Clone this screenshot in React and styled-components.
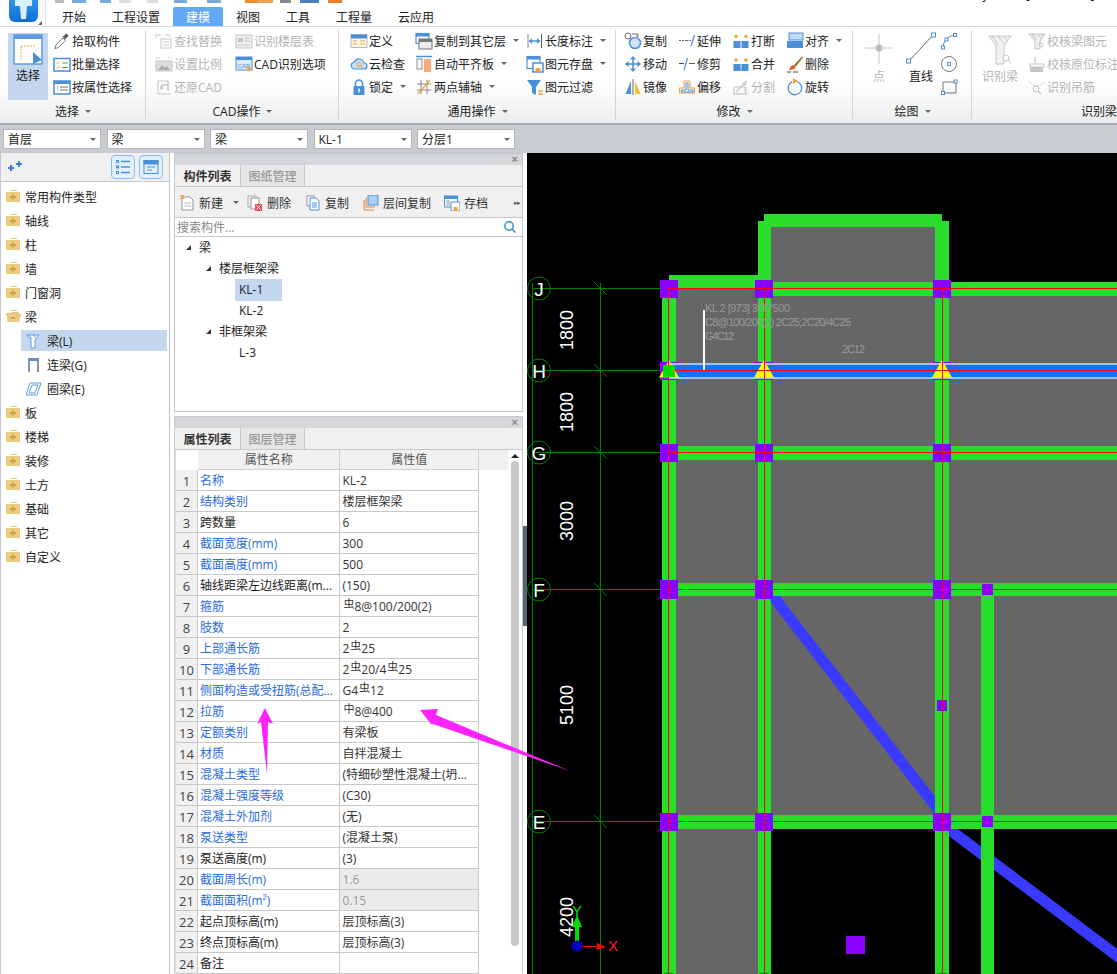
import styled, { createGlobalStyle } from "styled-components"

const Global = createGlobalStyle`
    html, body {
        margin: 0;
        padding: 0;
        background: #fff;
    }
    * {
        box-sizing: border-box;
    }
`

const BLUE = "#4a90d9"
const LIGHT = "#a9cff5"
const ORANGE = "#f5a03c"
const DIS = "#c6c6c6"

const Ico = ({ s = 18, vb = 18, children }) => (
    <svg width={s} height={s} viewBox={`0 0 ${vb} ${vb}`} fill="none">{children}</svg>
)

// ribbon icons
const icons = {
    pick: <Ico><path d="M2 16.500l1-3.500 7-7 2.500 2.500-7 7z" fill="#fff" stroke="#777" /><path d="M9.500 4.500l2-1 1-1.500c1-1 3.500 1 2.500 2.500l-1.500 1-1 2z" fill="#555" /></Ico>,
    batch: <Ico><rect x="1" y="3.500" width="16" height="12.500" fill="#fff" stroke={BLUE} strokeWidth="1.500" /><path d="M3.500 7.500l1.300 1.300 2.200-2.300M3.500 12l1.300 1.300 2.200-2.300" stroke={ORANGE} /><path d="M9 8h6M9 12.500h6" stroke="#888" /></Ico>,
    attr: <Ico><rect x="1" y="3" width="16" height="13" fill="#fff" stroke={BLUE} strokeWidth="1.500" /><rect x="1" y="3" width="16" height="3" fill={BLUE} /><path d="M4 9h1M7 9h8M4 12h1M7 12h8" stroke="#777" /></Ico>,
    find: <Ico><path d="M1 3h5M10 3h4l1 2M1 3v3" stroke={DIS} /><rect x="6" y="7" width="10" height="9" stroke={DIS} /><path d="M8 10h6M8 13h6" stroke={DIS} /></Ico>,
    floor: <Ico><rect x="1" y="3" width="16" height="13" fill="#eee" stroke={DIS} /><rect x="3" y="6" width="5" height="4" fill={DIS} /><path d="M10 6h5M10 9h5M3 13h12" stroke={DIS} /></Ico>,
    scale: <Ico><rect x="1" y="6" width="16" height="10" fill="#ddd" stroke={DIS} /><path d="M3 15l4-5 3 3 2-2 3 4z" fill="#aaa" /><path d="M1 3h4M13 3h4" stroke={DIS} strokeDasharray="2 1" /></Ico>,
    restore: <Ico><path d="M3 3v13h13M3 3h10" stroke={DIS} /><path d="M13 3v10M6 11a4 4 0 0 1 7-3" stroke={DIS} strokeWidth="1.500" /><path d="M5 8l1 4 3-2z" fill={DIS} /></Ico>,
    cadopt: <Ico><rect x="1" y="2" width="16" height="13" fill="#dbe9f8" stroke={BLUE} /><rect x="1" y="2" width="16" height="3" fill={BLUE} /><text x="2.500" y="12.500" fontSize="6" fontFamily="Liberation Sans" fill={BLUE}>CAD</text><path d="M12 10l5 4-3 1-1 3z" fill={ORANGE} /></Ico>,
    define: <Ico><rect x="1" y="2.500" width="16" height="13" fill="#fdf6e8" stroke="#bbb" /><rect x="1" y="2.500" width="16" height="4" fill={BLUE} /><path d="M3 9h4M3 12h4M10 9h5M10 12h5" stroke={ORANGE} /></Ico>,
    cloud: <Ico><path d="M5 14a3.500 3.500 0 0 1-.5-7 5 5 0 0 1 9.500 1 3 3 0 0 1 0 6z" fill="#c6dcf5" stroke={BLUE} strokeWidth="1.200" /><circle cx="9" cy="9.500" r="2" stroke={ORANGE} /><path d="M10.500 11l2 1.500" stroke={ORANGE} /></Ico>,
    lock: <Ico><path d="M5.500 8V5.500a3.500 3.500 0 0 1 7 0V8" stroke={BLUE} strokeWidth="1.600" /><rect x="3.500" y="8" width="11" height="9" rx="1" fill={BLUE} /><rect x="8.300" y="10.500" width="1.500" height="4" fill="#fff" /></Ico>,
    copyto: <Ico><rect x="1" y="1.500" width="13" height="10" fill="#fff" stroke={BLUE} strokeWidth="1.200" /><rect x="1" y="1.500" width="13" height="3" fill={BLUE} /><rect x="4" y="7" width="13" height="10" fill="#eee" stroke="#777" /><rect x="4" y="7" width="13" height="3" fill="#777" /></Ico>,
    flush: <Ico><path d="M1 1.500h16" stroke={BLUE} strokeWidth="1.500" /><rect x="2" y="4" width="5" height="10" fill="#fff" stroke="#888" /><rect x="9" y="4" width="7" height="13" fill="#fba878" /></Ico>,
    axis: <Ico><path d="M2 6h14M2 12h14M6 2v14M12 2v14" stroke="#888" /><path d="M3 16L15 2" stroke={ORANGE} strokeWidth="1.300" /></Ico>,
    dim: <Ico><path d="M2 2v14" stroke="#888" /><path d="M15.500 2v14" stroke="#555" /><path d="M3 9h11" stroke={BLUE} strokeWidth="1.500" /><path d="M3 9l3-3v6zM14 9l-3-3v6z" fill={BLUE} /></Ico>,
    saveel: <Ico><rect x="1" y="1.500" width="13" height="12" fill="#fff" stroke={BLUE} strokeWidth="1.200" /><rect x="1" y="1.500" width="13" height="3" fill={BLUE} /><rect x="7" y="8" width="10" height="9" fill="#fff" stroke={BLUE} strokeWidth="1.500" /><rect x="9.500" y="13" width="5" height="4" fill={ORANGE} /></Ico>,
    filter: <Ico><path d="M1 2h14l-5 7v8l-4-2V9z" fill={BLUE} /><path d="M12 13h5M12 16h5" stroke={ORANGE} strokeWidth="1.300" /></Ico>,
    copy: <Ico><circle cx="4" cy="4" r="3" stroke="#666" /><circle cx="11" cy="11" r="5.500" fill="#cfe2f7" stroke={BLUE} strokeWidth="1.500" /><path d="M8 2h6v3M14 5l-1.500-1.500" stroke="#666" /></Ico>,
    move: <Ico><path d="M9 1l3 3.500H6zM9 17l3-3.500H6zM1 9l3.500-3v6zM17 9l-3.500-3v6z" fill={BLUE} /><path d="M9 4v10M4 9h10" stroke={BLUE} strokeWidth="1.500" /></Ico>,
    mirror: <Ico><path d="M7 3v13H1.500z" fill={BLUE} /><path d="M11 3v13h5.500z" fill="#fbbc2c" /><path d="M9 1v16" stroke="#666" /></Ico>,
    extend: <Ico><path d="M1 8.500h8" stroke="#666" strokeDasharray="2 1" /><path d="M9 8.500h5" stroke="#666" strokeDasharray="1.500 1" /><path d="M16.500 3L13 14" stroke={BLUE} strokeWidth="1.200" /></Ico>,
    trim: <Ico><path d="M1 8.500h5M11 8.500h6" stroke="#444" /><path d="M11 8.500h6" stroke="#666" strokeDasharray="2 1" /><path d="M9.500 3L6 15" stroke={BLUE} strokeWidth="1.200" /></Ico>,
    offset: <Ico><path d="M6 3h5l1 1v6h4.500v5h-15v-5H6z" stroke={ORANGE} strokeWidth="1.100" /><path d="M8 5h2v7h5v2H3.500v-2H8z" stroke={BLUE} /></Ico>,
    split: <Ico><path d="M2 9h11v7H2zM14 9v7" stroke={DIS} /><path d="M4 14l11-11" stroke={DIS} strokeWidth="1.500" /><path d="M11 5l3 2" stroke={DIS} strokeWidth="2" /><path d="M1 16h16" stroke={DIS} strokeDasharray="2 1" /></Ico>,
    breakIt: <Ico><rect x="1.500" y="9" width="7" height="7" fill={BLUE} /><rect x="9.500" y="9" width="7" height="7" fill={BLUE} /><path d="M2 4.500h4M12 4.500h4" stroke={ORANGE} strokeWidth="1.300" /><path d="M4 2.500v4M14 2.500v4" stroke={ORANGE} strokeWidth="1.300" /></Ico>,
    merge: <Ico><rect x="1.500" y="9" width="15" height="7" fill={BLUE} /><path d="M9 9v7" stroke="#cfe2f7" /><path d="M2 5h4M12 5h4" stroke={ORANGE} strokeWidth="1.300" /><path d="M4 3v4M14 3v4" stroke={ORANGE} strokeWidth="1.300" /></Ico>,
    align: <Ico><rect x="3" y="1" width="14" height="7" fill="#c3dbf6" stroke={BLUE} /><rect x="1" y="9" width="16" height="7" fill={BLUE} /></Ico>,
    erase: <Ico><path d="M8 10L16 1.500l1 1-7 9z" fill="#a0702c" /><path d="M8 10c-3 0-4 2-5 5 3 0 6-1 7-3z" fill="#e0622a" /><path d="M1 17h4M7 17h5" stroke="#444" /></Ico>,
    rotate: <Ico><path d="M11 3.500a6.800 6.800 0 1 1-5 .3" stroke={BLUE} strokeWidth="1.300" /><path d="M7 0l5 3-5 3z" fill={ORANGE} /></Ico>,
    arc: <Ico><path d="M3 16c0-7 5-12 12-13" stroke="#777" /><rect x="1.500" y="14" width="3" height="3" fill="#fff" stroke={BLUE} /><rect x="5" y="6" width="3" height="3" fill="#fff" stroke={BLUE} /><rect x="13.500" y="1.500" width="3" height="3" fill="#fff" stroke={BLUE} /></Ico>,
    circle: <Ico><circle cx="9" cy="9" r="7.500" stroke="#777" /><rect x="7.500" y="7.500" width="3" height="3" fill="#fff" stroke={BLUE} /></Ico>,
    rect: <Ico><path d="M3 4h13v11H3z" stroke="#777" /><rect x="14" y="2" width="3" height="3" fill="#fff" stroke={BLUE} /><rect x="1.500" y="13.500" width="3" height="3" fill="#fff" stroke={BLUE} /></Ico>,
    checkBeam: <Ico><path d="M1 2h16l-5 7v8H7V9z" fill="#eee" stroke={DIS} /><path d="M4 2l4 6M9 2l4 4M13 2l2 2" stroke={DIS} /><circle cx="13" cy="13" r="2" stroke={DIS} /></Ico>,
    checkPos: <Ico><path d="M7 2v7h9v3H2V9h5" stroke={DIS} strokeWidth="1.200" /><rect x="2" y="12" width="13" height="5" fill={DIS} /></Ico>,
    hanger: <Ico><path d="M1 3c3 3 3 5 8 5s5-2 8-5" stroke={DIS} strokeDasharray="2 1" /><circle cx="8" cy="11" r="3" stroke={DIS} /><path d="M10 13l3 3" stroke={DIS} strokeWidth="1.500" /></Ico>,
}

const SelectBig = () => (
    <svg width="30" height="32" viewBox="0 0 30 32" fill="none">
        <rect x="1" y="1" width="28" height="29" fill="#fff" stroke="#5e9be0" strokeWidth="1.500" />
        <rect x="1" y="1" width="28" height="4" fill="#5e9be0" />
        <path d="M8 12h15M8 12v15" stroke="#f5b042" strokeDasharray="2 1" />
        <path d="M20 18l9 8-9 4z" fill="#4a90d9" />
    </svg>
)

const PointBig = () => (
    <svg width="30" height="32" viewBox="0 0 30 32" fill="none">
        <path d="M15 2v30M1 16h28" stroke="#c6c6c6" />
        <circle cx="15" cy="16" r="3.500" fill="#bdbdbd" />
    </svg>
)

const LineBig = () => (
    <svg width="32" height="34" viewBox="0 0 32 34" fill="none">
        <path d="M4 30L28 4" stroke="#666" />
        <rect x="1.500" y="28" width="4" height="4" fill="#fff" stroke="#4a90d9" />
        <rect x="26.500" y="2" width="4" height="4" fill="#fff" stroke="#4a90d9" />
    </svg>
)

const BeamBig = () => (
    <svg width="24" height="32" viewBox="0 0 24 32" fill="none">
        <path d="M1 2h22l-7 10v18H8V12z" fill="#f1f1f1" stroke="#c6c6c6" />
        <path d="M4 2l6 9M10 2l6 8M16 2l4 5" stroke="#c6c6c6" />
        <circle cx="18" cy="24" r="3" fill="#fff" stroke="#c6c6c6" />
        <path d="M20 26l3 3" stroke="#c6c6c6" />
    </svg>
)

// side tree icons
const Folder = ({ open }) => (
    <svg width="15" height="14" viewBox="0 0 15 14" fill="none">
        <path d="M5 1h6v1H5z" fill="#ecc885" />
        {open ? <path d="M0 4h5l1-1h7v2H3l2 8h8l2-8H5L3 13H2z" fill="#e9c47c" /> : <path d="M0 3h14v10H0z" fill="#edc981" />}
        {open ? <path d="M3 5h12l-2 8H1z" fill="#edc981" /> : null}
        {open ? <path d="M5 9h4" stroke="#c7902f" strokeWidth="1.500" /> : <path d="M4 8h6M7 5.500v5" stroke="#d09a3a" strokeWidth="1.500" />}
    </svg>
)

const BeamIcon = () => (
    <svg width="16" height="16" viewBox="0 0 16 16" fill="none">
        <path d="M1 2h12l-4 5v8H5V7z" fill="#fff" stroke="#5e9be0" />
        <path d="M3 2l3 4M7 2l3 3" stroke="#5e9be0" />
    </svg>
)
const LinkBeamIcon = () => (
    <svg width="16" height="16" viewBox="0 0 16 16" fill="none">
        <rect x="2" y="1" width="11" height="3" fill="#6b8fb8" />
        <path d="M3 4v11M12 4v11" stroke="#8b96a3" strokeWidth="2" />
    </svg>
)
const RingIcon = () => (
    <svg width="16" height="16" viewBox="0 0 16 16" fill="none">
        <path d="M4 2h11l-4 12H0z" fill="#fff" stroke="#5e9be0" />
        <path d="M6 4h6l-3 8H3z" stroke="#5e9be0" />
    </svg>
)

// panel toolbar icons
const NewIcon = () => (
    <svg width="16" height="16" viewBox="0 0 16 16" fill="none">
        <path d="M3 2h8l3 3v10H3z" fill="#fff" stroke="#8b96a3" />
        <path d="M5 8h7M5 11h7" stroke="#b0b8c0" />
        <path d="M1 1h4M3 0v4M1 4l4-4M1 0l4 4" stroke="#f5a03c" />
    </svg>
)
const DeleteIcon = () => (
    <svg width="16" height="16" viewBox="0 0 16 16" fill="none">
        <path d="M1 1h8v11H1z" stroke="#aaa" />
        <path d="M4 3h8v11H4z" fill="#fff" stroke="#8b96a3" />
        <rect x="8" y="9" width="7" height="7" fill="#e2504a" />
        <path d="M9.500 10.500l4 4M13.500 10.500l-4 4" stroke="#fff" />
    </svg>
)
const CopyIcon = () => (
    <svg width="16" height="16" viewBox="0 0 16 16" fill="none">
        <path d="M2 1h7v10H2z" fill="#fff" stroke="#8b96a3" />
        <path d="M5 3h6l3 3v9H5z" fill="#fff" stroke="#4a90d9" />
        <path d="M7 8h5M7 10h5M7 12h5" stroke="#4a90d9" />
    </svg>
)
const FloorCopyIcon = () => (
    <svg width="16" height="16" viewBox="0 0 16 16" fill="none">
        <rect x="5" y="0" width="10" height="10" fill={LIGHT} stroke="#4a90d9" />
        <path d="M3 3v9h9M1 5v10h10" stroke="#f07d2a" />
    </svg>
)
const SaveIcon = () => (
    <svg width="16" height="16" viewBox="0 0 16 16" fill="none">
        <rect x="0.500" y="1" width="13" height="11" fill="#fff" stroke="#4a90d9" />
        <rect x="0.500" y="1" width="13" height="3" fill="#4a90d9" />
        <path d="M2 6h4M2 8h4M2 10h4" stroke="#999" />
        <rect x="7" y="7" width="9" height="9" fill="#fff" stroke="#4a90d9" />
        <rect x="9.500" y="12" width="4" height="4" fill="#f5a03c" />
    </svg>
)

const ribbonGroups = [
    {
        label: "选择", width: 146, pad: 8,
        big: [{ icon: <SelectBig />, text: "选择", active: true, width: 40 }],
        columns: [45, 96],
        tools: [
            [{ icon: "pick", text: "拾取构件" }, { icon: "batch", text: "批量选择" }, { icon: "attr", text: "按属性选择" }],
        ],
    },
    {
        label: "CAD操作", width: 193, pad: 9,
        columns: [80, 100],
        tools: [
            [{ icon: "find", text: "查找替换", off: true }, { icon: "scale", text: "设置比例", off: true }, { icon: "restore", text: "还原CAD", off: true }],
            [{ icon: "floor", text: "识别楼层表", off: true }, { icon: "cadopt", text: "CAD识别选项" }],
        ],
    },
    {
        label: "通用操作", width: 277, pad: 11,
        columns: [65, 111, 90],
        tools: [
            [{ icon: "define", text: "定义" }, { icon: "cloud", text: "云检查" }, { icon: "lock", text: "锁定", caret: true }],
            [{ icon: "copyto", text: "复制到其它层", caret: true }, { icon: "flush", text: "自动平齐板", caret: true }, { icon: "axis", text: "两点辅轴", caret: true }],
            [{ icon: "dim", text: "长度标注", caret: true }, { icon: "saveel", text: "图元存盘", caret: true }, { icon: "filter", text: "图元过滤" }],
        ],
    },
    {
        label: "修改", width: 237, pad: 8,
        columns: [54, 54, 54, 70],
        tools: [
            [{ icon: "copy", text: "复制" }, { icon: "move", text: "移动" }, { icon: "mirror", text: "镜像" }],
            [{ icon: "extend", text: "延伸" }, { icon: "trim", text: "修剪" }, { icon: "offset", text: "偏移" }],
            [{ icon: "breakIt", text: "打断" }, { icon: "merge", text: "合并" }, { icon: "split", text: "分割", off: true }],
            [{ icon: "align", text: "对齐", caret: true }, { icon: "erase", text: "删除" }, { icon: "rotate", text: "旋转" }],
        ],
    },
]

const tabs = ["开始", "工程设置", "建模", "视图", "工具", "工程量", "云应用"]

const quick = [
    [9, 8, "#bbb"], [14, 14, "#7aa9dc"], [11, 8, "#7aa9dc"], [12, 16, "#ddd"], [11, 16, "#ddd"], [13, 20, "#7aa9dc"],
    [14, 24, "#7aa9dc"], [13, 0, "#e8902e"], [15, 7, "#e8a25a"], [11, 9, "#888"], [19, 9, "#4a7fb8"], [14, 6, "#e8802e"],
]

const selects = ["首层", "梁", "梁", "KL-1", "分层1"]

const sideTree = [
    { text: "常用构件类型" }, { text: "轴线" }, { text: "柱" }, { text: "墙" }, { text: "门窗洞" },
    { text: "梁", open: true },
    { text: "梁(L)", icon: <BeamIcon />, child: true, selected: true },
    { text: "连梁(G)", icon: <LinkBeamIcon />, child: true },
    { text: "圈梁(E)", icon: <RingIcon />, child: true },
    { text: "板" }, { text: "楼梯" }, { text: "装修" }, { text: "土方" }, { text: "基础" }, { text: "其它" }, { text: "自定义" },
]

const listTree = [
    { text: "梁", level: 0, arrow: true },
    { text: "楼层框架梁", level: 1, arrow: true },
    { text: "KL-1", level: 2, selected: true },
    { text: "KL-2", level: 2 },
    { text: "非框架梁", level: 1, arrow: true },
    { text: "L-3", level: 2 },
]

const listTools = [
    { icon: <NewIcon />, text: "新建", caret: true, width: 68 },
    { icon: <DeleteIcon />, text: "删除", width: 58 },
    { icon: <CopyIcon />, text: "复制", width: 58 },
    { icon: <FloorCopyIcon />, text: "层间复制", width: 81 },
    { icon: <SaveIcon />, text: "存档", width: 60 },
]

const R = ({ children }) => <Rebar>{children}</Rebar>

const props = [
    ["名称", "KL-2", true],
    ["结构类别", "楼层框架梁", true],
    ["跨数量", "6"],
    ["截面宽度(mm)", "300", true],
    ["截面高度(mm)", "500", true],
    ["轴线距梁左边线距离(m...", "(150)"],
    ["箍筋", <><R>虫</R>8@100/200(2)</>, true],
    ["肢数", "2", true],
    ["上部通长筋", <>2<R>虫</R>25</>, true],
    ["下部通长筋", <>2<R>虫</R>20/4<R>虫</R>25</>, true],
    ["侧面构造或受扭筋(总配...", <>G4<R>虫</R>12</>, true],
    ["拉筋", <><R>中</R>8@400</>, true],
    ["定额类别", "有梁板", true],
    ["材质", "自拌混凝土", true],
    ["混凝土类型", "(特细砂塑性混凝土(坍...", true],
    ["混凝土强度等级", "(C30)", true],
    ["混凝土外加剂", "(无)", true],
    ["泵送类型", "(混凝土泵)", true],
    ["泵送高度(m)", "(3)"],
    ["截面周长(m)", "1.6", true, true],
    ["截面面积(m²)", "0.15", true, true],
    ["起点顶标高(m)", "层顶标高(3)"],
    ["终点顶标高(m)", "层顶标高(3)"],
    ["备注", ""],
]

function ToolItem({ tool }) {
    return (
        <Tool $off={tool.off}>
            <ToolIcon>{icons[tool.icon]}</ToolIcon>
            <span>{tool.text}</span>
            {tool.caret && <Caret />}
        </Tool>
    )
}

function RibbonGroup({ group }) {
    return (
        <Group $width={group.width} $pad={group.pad}>
            <GroupBody>
                {group.big && group.big.map((b) => (
                    <BigTool key={b.text} $active={b.active} $width={b.width}>
                        {b.icon}
                        <span>{b.text}</span>
                    </BigTool>
                ))}
                {group.tools.map((col, i) => (
                    <ToolColumn key={i} $width={group.columns[group.big ? i + 1 : i]}>
                        {col.map((t) => <ToolItem key={t.text} tool={t} />)}
                    </ToolColumn>
                ))}
            </GroupBody>
            <GroupLabel $pad={group.pad}>{group.label}<Caret /></GroupLabel>
        </Group>
    )
}

const gridRows = [
    { y: 288, letter: "J", top: 280, h: 18 },
    { y: 370, letter: "H", top: 362, h: 18 },
    { y: 452, letter: "G", top: 444, h: 18 },
    { y: 589, letter: "F", top: 580, h: 19 },
    { y: 821, letter: "E", top: 813, h: 18 },
]
const colsX = [669, 764, 942]
const dims = [["1800", 330], ["1800", 412], ["3000", 521], ["5100", 705], ["4200", 917]]

// the CAD viewport, drawn in page coordinates
function CadDrawing() {
    return (
        <svg width="590" height="821" viewBox="527 153 590 821" style={{ display: "block" }}>
            <g shapeRendering="crispEdges" fill="#666">
                <rect x="527" y="153" width="590" height="821" fill="#000" />
                <rect x="764" y="221" width="178" height="70" />
                <rect x="669" y="288" width="448" height="534" />
                <rect x="669" y="822" width="95" height="152" />
            </g>

            <path d="M768 590L940 812" stroke="#3a3aff" strokeWidth="11" />
            <path d="M942 824L1120 958" stroke="#3a3aff" strokeWidth="11" />

            <g shapeRendering="crispEdges" fill="#2bdd2b">
                <rect x="662" y="288" width="14" height="686" />
                <rect x="758" y="221" width="13" height="753" />
                <rect x="935" y="221" width="14" height="753" />
                <rect x="981" y="589" width="13" height="385" />
                <rect x="764" y="214" width="178" height="13" />
                <rect x="669" y="275" width="95" height="14" />
                <rect x="771" y="282" width="346" height="14" />
                <rect x="669" y="446" width="448" height="14" />
                <rect x="669" y="583" width="448" height="13" />
                <rect x="669" y="815" width="448" height="14" />
            </g>

            <g shapeRendering="crispEdges">
                {colsX.map((x) => gridRows.map((r) => (
                    <rect key={`${x}-${r.y}`} x={x - 9} y={r.top} width="18" height={r.h} fill="#8800ff" />
                )))}
                <rect x="982" y="584" width="11" height="11" fill="#8800ff" />
                <rect x="982" y="816" width="11" height="11" fill="#8800ff" />
                <rect x="937" y="700" width="10" height="11" fill="#8800ff" />
                <rect x="846" y="936" width="19" height="18" fill="#8800ff" />
                <rect x="668" y="363" width="449" height="16" fill="#9cc4f8" />
                <rect x="668" y="365" width="449" height="12" fill="#1070ff" />
            </g>

            {colsX.map((x) => <path key={x} d={`M${x} 360l10 17.500h-20z`} fill="#ffff00" />)}

            <g shapeRendering="crispEdges" fill="#ff0000">
                <rect x="668" y="288" width="1" height="686" />
                <rect x="764" y="288" width="1" height="686" />
                <rect x="942" y="288" width="1" height="686" />
                {gridRows.map((r) => <rect key={r.y} x="668" y={r.y} width="449" height="1" />)}
            </g>

            <rect x="663" y="365" width="12" height="12" fill="#00e000" shapeRendering="crispEdges" />
            <rect x="703" y="310" width="2" height="60" fill="#fff" shapeRendering="crispEdges" />

            <DimText x="705" y="312" textLength="85">KL 2 [973] 300*500</DimText>
            <DimText x="705" y="326" textLength="146">C8@100/200(2) 2C25;2C20/4C25</DimText>
            <DimText x="705" y="340" textLength="29">G4C12</DimText>
            <DimText x="842" y="353" textLength="23">2C12</DimText>

            <g stroke="#008000" fill="none">
                <path d="M532.500 283V974M600.500 283V974" shapeRendering="crispEdges" />
                {gridRows.map((r) => (
                    <g key={r.y}>
                        <path d={`M532 ${r.y + 0.5}H660`} shapeRendering="crispEdges" />
                        <path d={`M594 ${r.y - 6}l13 13`} />
                        <circle cx="539" cy={r.y + 0.5} r="11.500" />
                    </g>
                ))}
                {colsX.map((x) => <circle key={x} cx={x} cy="985" r="12" />)}
            </g>

            {gridRows.map((r) => <AxisLetter key={r.y} x="539" y={r.y + 7.5}>{r.letter}</AxisLetter>)}
            {dims.map(([t, y]) => <DimLabel key={y} transform={`translate(573 ${y}) rotate(-90)`}>{t}</DimLabel>)}

            <path d="M575 946V927h-3l5-12 5 12h-3v19z" fill="#00e000" />
            <path d="M577 946h20v-3l9 4-9 3v-3h-20z" fill="#ff0000" />
            <circle cx="577" cy="946" r="5.500" fill="#0000c0" />
            <AxisMark x="577" y="916" fill="#00e000">Y</AxisMark>
            <AxisMark x="613" y="951" fill="#ff2020">X</AxisMark>
        </svg>
    )
}

export default function App() {
    return (
        <Page>
            <Global />

            <Header>
                <LogoCell>
                    <svg width="29" height="22" viewBox="0 0 29 22">
                        <defs>
                            <linearGradient id="lg" x1="0" y1="0" x2="0" y2="1">
                                <stop offset="0" stopColor="#3ea5f2" />
                                <stop offset="1" stopColor="#0b6fd8" />
                            </linearGradient>
                        </defs>
                        <rect x="0" y="-10" width="29" height="32" rx="6" fill="url(#lg)" />
                        <path d="M6 0h17v6h-5l-1 13h-5l-1-13H6z" fill="#d9f0ff" />
                    </svg>
                    <Grip />
                </LogoCell>
                <HeaderRight>
                    <TitleRow>
                        <QuickBar>
                            {quick.map(([w, gap, color], i) => <QuickBit key={i} $w={w} $gap={gap} $color={color} />)}
                        </QuickBar>
                        <TitleText>广联达BIM土建计量平台 GTJ2018 - [未保存工程]</TitleText>
                    </TitleRow>
                    <TabRow>
                        {tabs.map((t) => <Tab key={t} $active={t === "建模"}>{t}</Tab>)}
                    </TabRow>
                </HeaderRight>
            </Header>

            <Ribbon>
                {ribbonGroups.map((g) => <RibbonGroup key={g.label} group={g} />)}

                <Group $width={119} $pad={0}>
                    <GroupBody>
                        <DrawBig $off $width={42} $lift={3} $after={5}><PointBig /><span>点</span></DrawBig>
                        <DrawBig $width={32} $lift={2} $after={3}><LineBig /><span>直线</span></DrawBig>
                        <MiniIcons>{icons.arc}{icons.circle}{icons.rect}</MiniIcons>
                    </GroupBody>
                    <GroupLabel $pad={0}>绘图<Caret /></GroupLabel>
                </Group>

                <Group $width={145} $pad={5} $last>
                    <GroupBody>
                        <DrawBig $off $width={36} $lift={5} $after={10}><BeamBig /><span>识别梁</span></DrawBig>
                        <ToolColumn $width={100}>
                            <ToolItem tool={{ icon: "checkBeam", text: "校核梁图元", off: true }} />
                            <ToolItem tool={{ icon: "checkPos", text: "校核原位标注", off: true }} />
                            <ToolItem tool={{ icon: "hanger", text: "识别吊筋", off: true }} />
                        </ToolColumn>
                    </GroupBody>
                    <GroupLabel $right>识别梁</GroupLabel>
                </Group>
            </Ribbon>

            <SelectBar>
                {selects.map((s, i) => <FakeSelect key={i}>{s}<Caret /></FakeSelect>)}
            </SelectBar>

            <Main>
                <SidePanel>
                    <SideTop>
                        <AddMark>
                            <svg width="16" height="12" viewBox="0 0 16 12" fill="none">
                                <path d="M1 8h6M4 5v6" stroke="#3a7fc8" strokeWidth="2" />
                                <path d="M9 4h6M12 1v6" stroke="#3a7fc8" strokeWidth="2" />
                            </svg>
                        </AddMark>
                        <ViewBtn>
                            <svg width="16" height="16" viewBox="0 0 16 16" fill="none" stroke="#4a90d9">
                                <rect x="1.500" y="1.500" width="2" height="2" />
                                <rect x="1.500" y="7" width="2" height="2" />
                                <rect x="1.500" y="12.500" width="2" height="2" />
                                <path d="M6 2.500h9M6 8h9M6 13.500h9" strokeWidth="1.300" />
                            </svg>
                        </ViewBtn>
                        <ViewBtn>
                            <svg width="16" height="16" viewBox="0 0 16 16" fill="none" stroke="#4a90d9">
                                <rect x="1" y="1.500" width="14" height="13" />
                                <rect x="1" y="1.500" width="14" height="3.500" fill="#4a90d9" />
                                <path d="M4 8h8M4 11h5" />
                            </svg>
                        </ViewBtn>
                    </SideTop>
                    <SideList>
                        {sideTree.map((n, i) => (
                            <SideRow key={i} $child={n.child} $selected={n.selected}>
                                <SideIcon $child={n.child}>{n.icon || <Folder open={n.open} />}</SideIcon>
                                {n.text}
                            </SideRow>
                        ))}
                    </SideList>
                </SidePanel>

                <CenterColumn>
                    <Panel $height={259}>
                        <PanelStrip><CloseMark>×</CloseMark></PanelStrip>
                        <PanelTabs>
                            <PanelTab $active>构件列表</PanelTab>
                            <PanelTab>图纸管理</PanelTab>
                        </PanelTabs>
                        <ListToolbar>
                            {listTools.map((t) => (
                                <ListTool key={t.text} $width={t.width}>
                                    {t.icon}
                                    <span>{t.text}</span>
                                    {t.caret && <Caret />}
                                </ListTool>
                            ))}
                            <MoreMark>▸▸</MoreMark>
                        </ListToolbar>
                        <SearchRow>
                            <span>搜索构件...</span>
                            <svg width="14" height="14" viewBox="0 0 14 14" fill="none" stroke="#3a8fd0" strokeWidth="1.500">
                                <circle cx="6" cy="6" r="4.200" />
                                <path d="M9 9l3.500 3.500" />
                            </svg>
                        </SearchRow>
                        <ListTree>
                            {listTree.map((n) => (
                                <ListRow key={n.text} $level={n.level}>
                                    {n.arrow && <TreeArrow />}
                                    <ListText $selected={n.selected}>{n.text}</ListText>
                                </ListRow>
                            ))}
                        </ListTree>
                    </Panel>

                    <Panel $grow>
                        <PanelStrip><CloseMark>×</CloseMark></PanelStrip>
                        <PanelTabs>
                            <PanelTab $active>属性列表</PanelTab>
                            <PanelTab>图层管理</PanelTab>
                        </PanelTabs>
                        <TableWrap>
                            <Table>
                                <HeadRow>
                                    <NumHead />
                                    <NameHead>属性名称</NameHead>
                                    <ValueHead>属性值</ValueHead>
                                </HeadRow>
                                {props.map(([name, value, blue, ro], i) => (
                                    <Row key={i}>
                                        <NumCell>{i + 1}</NumCell>
                                        <NameCell $blue={blue}>{name}</NameCell>
                                        <ValueCell $readonly={ro}>{value}</ValueCell>
                                    </Row>
                                ))}
                            </Table>
                            <ScrollArea>
                                <ScrollUp />
                                <ScrollThumb />
                            </ScrollArea>
                        </TableWrap>
                    </Panel>
                </CenterColumn>

                <Splitter><SplitHandle /></Splitter>

                <Canvas><CadDrawing /></Canvas>
            </Main>

            <Arrows viewBox="0 0 1117 974">
                <path d="M265 708l8 16-5-2-1 52-6-52-4 2z" fill="#ff22ff" />
                <path d="M420 710l18-1-2 6 134 56-137-47-2 0z" fill="#ff22ff" />
            </Arrows>
        </Page>
    )
}

const Page = styled.div`
    position: relative;
    width: 1117px;
    height: 974px;
    overflow: hidden;
    display: flex;
    flex-direction: column;
    font-family: "Open Sans", "Noto Sans CJK SC", sans-serif;
    font-size: 12px;
    color: #222;
    background: #fff;
`

const Header = styled.div`
    height: 27px;
    display: flex;
    flex-shrink: 0;
    border-bottom: 1px solid #d8d8d8;
`

const LogoCell = styled.div`
    position: relative;
    width: 46px;
    padding-left: 9px;
    border-right: 1px solid #e2e2e2;
`

const Grip = styled.i`
    position: absolute;
    right: 3px;
    bottom: 1px;
    border-style: solid;
    border-width: 0 0 4px 4px;
    border-color: transparent transparent #666 transparent;
`

const HeaderRight = styled.div`
    flex: 1;
    display: flex;
    flex-direction: column;
`

const TitleRow = styled.div`
    height: 8px;
    overflow: hidden;
    display: flex;
    justify-content: space-between;
    padding-right: 22px;
`

const QuickBar = styled.div`
    display: flex;
    padding-left: 9px;
    height: 3px;
`

const QuickBit = styled.i`
    width: ${(p) => p.$w}px;
    margin-right: ${(p) => p.$gap}px;
    background: ${(p) => p.$color};
`

const TitleText = styled.div`
    margin-top: -14px;
    line-height: 18px;
    font-size: 12px;
    letter-spacing: 0.2px;
    color: #111;
`

const TabRow = styled.div`
    display: flex;
    height: 19px;
    padding-left: 3px;
`

const Tab = styled.div`
    height: 19px;
    padding: 0 13px;
    line-height: 21px;
    color: ${(p) => (p.$active ? "#fff" : "#222")};
    background: ${(p) => (p.$active ? "#62a8f5" : "transparent")};
    border-radius: 2px 2px 0 0;
`

const Ribbon = styled.div`
    height: 98px;
    display: flex;
    flex-shrink: 0;
    background: linear-gradient(#fff 0%, #fff 55%, #eceeee 100%);
    border-bottom: 2px solid #a8aaad;
`

const Group = styled.div`
    position: relative;
    width: ${(p) => p.$width}px;
    flex-shrink: 0;
    display: flex;
    flex-direction: column;
    padding: 2px 0 0 ${(p) => p.$pad}px;
    overflow: ${(p) => (p.$last ? "hidden" : "visible")};
    &::after {
        content: "";
        position: absolute;
        right: 0;
        top: 3px;
        bottom: 2px;
        width: 1px;
        background: ${(p) => (p.$last ? "transparent" : "#d4d6d8")};
    }
`

const GroupBody = styled.div`
    height: 70px;
    display: flex;
`

const GroupLabel = styled.div`
    height: 24px;
    margin-left: ${(p) => (p.$pad ? -p.$pad : 0)}px;
    display: flex;
    align-items: center;
    justify-content: ${(p) => (p.$right ? "flex-end" : "center")};
    white-space: nowrap;
`

const ToolColumn = styled.div`
    width: ${(p) => p.$width}px;
    flex-shrink: 0;
    display: flex;
    flex-direction: column;
`

const Tool = styled.div`
    height: 23px;
    display: flex;
    align-items: center;
    gap: 1px;
    white-space: nowrap;
    color: ${(p) => (p.$off ? "#b4b4b4" : "#222")};
`

const ToolIcon = styled.span`
    width: 18px;
    height: 18px;
    flex-shrink: 0;
    display: block;
`

const Caret = styled.i`
    display: inline-block;
    margin-left: 6px;
    border-style: solid;
    border-width: 3px 3.5px 0 3.5px;
    border-color: #666 transparent transparent transparent;
`

const BigTool = styled.div`
    width: ${(p) => p.$width}px;
    height: 67px;
    margin-top: 4px;
    margin-right: 5px;
    padding-top: 1px;
    display: flex;
    flex-direction: column;
    align-items: center;
    flex-shrink: 0;
    gap: 2px;
    background: ${(p) => (p.$active ? "#c5d7ee" : "transparent")};
    span {
        line-height: 16px;
    }
`

const DrawBig = styled.div`
    width: ${(p) => p.$width}px;
    height: 56px;
    flex-shrink: 0;
    margin-left: ${(p) => (p.$off ? "5px" : "0")};
    margin-right: ${(p) => p.$after}px;
    padding-top: ${(p) => p.$lift}px;
    display: flex;
    flex-direction: column;
    align-items: center;
    justify-content: space-between;
    white-space: nowrap;
    color: ${(p) => (p.$off ? "#b4b4b4" : "#222")};
    span {
        line-height: 16px;
    }
`

const MiniIcons = styled.div`
    display: flex;
    flex-direction: column;
    justify-content: space-around;
    height: 70px;
`

const SelectBar = styled.div`
    height: 28px;
    flex-shrink: 0;
    display: flex;
    align-items: center;
    gap: 5.5px;
    padding-left: 3px;
    background: #c8cbcf;
`

const FakeSelect = styled.div`
    width: 98px;
    height: 20px;
    display: flex;
    align-items: center;
    justify-content: space-between;
    padding: 0 4px;
    background: #fff;
    border: 1px solid #b5b7ba;
`

const Main = styled.div`
    flex: 1;
    min-height: 0;
    display: flex;
`

const SidePanel = styled.div`
    width: 170px;
    flex-shrink: 0;
    border-left: 1px solid #c4c7cb;
    border-right: 1px solid #bfc2c6;
`

const SideTop = styled.div`
    height: 29px;
    display: flex;
    align-items: center;
    gap: 4px;
    padding-left: 6px;
    background: #f0f0f0;
    border-bottom: 1px solid #c4c7cb;
`

const AddMark = styled.span`
    width: 100px;
    display: block;
`

const ViewBtn = styled.div`
    width: 24px;
    height: 24px;
    display: flex;
    align-items: center;
    justify-content: center;
    background: #e2f0fd;
    border: 1px solid #8abcf0;
    border-radius: 4px;
`

const SideList = styled.div`
    padding-top: 3px;
`

const SideRow = styled.div`
    height: 24px;
    display: flex;
    align-items: center;
    margin-left: ${(p) => (p.$child ? "20px" : "0")};
    margin-right: 2px;
    padding-left: 5px;
    background: ${(p) => (p.$selected ? "linear-gradient(transparent 1px, #c5d7ee 1px, #c5d7ee 22px, transparent 22px)" : "none")};
`

const SideIcon = styled.span`
    display: block;
    width: ${(p) => (p.$child ? "21px" : "19px")};
    height: 16px;
    flex-shrink: 0;
`

const CenterColumn = styled.div`
    width: 349px;
    flex-shrink: 0;
    margin-left: 4px;
    display: flex;
    flex-direction: column;
    gap: 4px;
`

const Panel = styled.div`
    ${(p) => (p.$grow ? "flex: 1; min-height: 0;" : `height: ${p.$height}px;`)}
    display: flex;
    flex-direction: column;
    border: 1px solid #c4c7cb;
    border-bottom-color: ${(p) => (p.$grow ? "transparent" : "#c4c7cb")};
`

const PanelStrip = styled.div`
    height: 11px;
    flex-shrink: 0;
    display: flex;
    justify-content: flex-end;
    align-items: center;
    padding-right: 4px;
    background: #d5d7db;
`

const CloseMark = styled.span`
    font-size: 11px;
    line-height: 11px;
    color: #888;
    font-family: "Liberation Sans", sans-serif;
    font-weight: bold;
`

const PanelTabs = styled.div`
    height: 22px;
    flex-shrink: 0;
    display: flex;
    background: #f0f0f0;
    border-bottom: 1px solid #c4c7cb;
`

const PanelTab = styled.div`
    width: 65px;
    display: flex;
    align-items: center;
    justify-content: center;
    font-weight: ${(p) => (p.$active ? 700 : 500)};
    color: ${(p) => (p.$active ? "#333" : "#999")};
    background: ${(p) => (p.$active ? "#f0f0f0" : "#e6e6e6")};
    border-right: ${(p) => (p.$active ? "none" : "1px solid #c4c7cb")};
    border-left: ${(p) => (p.$active ? "none" : "1px solid #c4c7cb")};
`

const ListToolbar = styled.div`
    height: 31px;
    flex-shrink: 0;
    display: flex;
    align-items: center;
    padding: 1px 0 0 4px;
    background: #f0f0f0;
    border-bottom: 1px solid #c4c7cb;
`

const ListTool = styled.div`
    width: ${(p) => p.$width}px;
    flex-shrink: 0;
    display: flex;
    align-items: center;
    gap: 4px;
    color: #333;
`

const MoreMark = styled.span`
    margin-left: auto;
    padding-right: 2px;
    font-size: 7px;
    letter-spacing: -1px;
    color: #555;
`

const SearchRow = styled.div`
    height: 19px;
    flex-shrink: 0;
    display: flex;
    align-items: center;
    justify-content: space-between;
    padding: 0 5px 0 2px;
    color: #888;
    border-bottom: 1px solid #c4c7cb;
`

const ListTree = styled.div`
    flex: 1;
    background: #fff;
`

const ListRow = styled.div`
    position: relative;
    height: 21px;
    display: flex;
    align-items: center;
    padding-left: ${(p) => 24 + p.$level * 20}px;
`

const TreeArrow = styled.i`
    position: absolute;
    margin-left: -13px;
    border-style: solid;
    border-width: 0 0 5px 5px;
    border-color: transparent transparent #333 transparent;
`

const ListText = styled.span`
    line-height: 22px;
    padding: 0 19px 0 4px;
    margin-left: -4px;
    background: ${(p) => (p.$selected ? "#c5d7ee" : "transparent")};
`

const TableWrap = styled.div`
    flex: 1;
    min-height: 0;
    display: flex;
    background: #fff;
`

const Table = styled.div`
    width: 304px;
    flex-shrink: 0;
    border-left: 1px solid #e2e2e2;
`

const HeadRow = styled.div`
    display: flex;
    height: 20px;
`

const NumHead = styled.div`
    width: 22px;
    background: #fff;
`

const NameHead = styled.div`
    width: 143px;
    text-align: center;
    line-height: 20px;
    color: #555;
    background: #f0f0f0;
    border-right: 1px solid #d0d0d0;
    border-bottom: 1px solid #d0d0d0;
`

const ValueHead = styled(NameHead)`
    width: 139px;
`

const Row = styled.div`
    display: flex;
    height: 21px;
    line-height: 22px;
    border-bottom: 1px solid #c8c8c8;
`

const NumCell = styled.div`
    width: 22px;
    text-align: center;
    font-size: 13px;
    color: #444;
    background: #f0f0f0;
    border-right: 1px solid #c8c8c8;
`

const NameCell = styled.div`
    width: 143px;
    padding-left: 2px;
    overflow: hidden;
    white-space: nowrap;
    color: ${(p) => (p.$blue ? "#2a6be0" : "#222")};
    border-right: 1px solid #c8c8c8;
`

const ValueCell = styled.div`
    width: 139px;
    padding-left: 2px;
    overflow: hidden;
    white-space: nowrap;
    color: ${(p) => (p.$readonly ? "#999" : "#333")};
    background: ${(p) => (p.$readonly ? "#ebebeb" : "#fff")};
    border-right: 1px solid #c8c8c8;
`

const Rebar = styled.span`
    font-size: 11px;
    position: relative;
    top: -3px;
    margin: 0 0 0 1px;
`

const ScrollArea = styled.div`
    flex: 1;
    display: flex;
    flex-direction: column;
    align-items: flex-start;
    padding-left: 32px;
    padding-top: 4px;
    background: linear-gradient(#f0f0f0, #f0f0f0) no-repeat 0 0 / 29px 20px;
`

const ScrollUp = styled.i`
    border-style: solid;
    border-width: 0 4px 4px 4px;
    border-color: transparent transparent #222 transparent;
`

const ScrollThumb = styled.div`
    width: 8px;
    height: 485px;
    margin-top: 3px;
    background: #c8c8c8;
    border-radius: 4px;
`

const Splitter = styled.div`
    width: 4px;
    flex-shrink: 0;
    display: flex;
    align-items: flex-start;
    background: #fff;
`

const SplitHandle = styled.div`
    width: 4px;
    height: 100px;
    margin-top: 373px;
    background: #5a6570;
`

const Canvas = styled.div`
    flex: 1;
    min-width: 0;
    background: #000;
`

const DimText = styled.text`
    font-family: "Liberation Sans", sans-serif;
    font-size: 11px;
    fill: #999;
`

const DimLabel = styled.text`
    font-family: "Liberation Sans", sans-serif;
    font-size: 18px;
    fill: #fff;
    text-anchor: middle;
`

const AxisLetter = styled.text`
    font-family: "Liberation Sans", sans-serif;
    font-size: 19px;
    fill: #fff;
    text-anchor: middle;
`

const AxisMark = styled.text`
    font-family: "Liberation Sans", sans-serif;
    font-size: 15px;
    text-anchor: middle;
`

const Arrows = styled.svg`
    position: absolute;
    left: 0;
    top: 0;
    width: 1117px;
    height: 974px;
    pointer-events: none;
`
